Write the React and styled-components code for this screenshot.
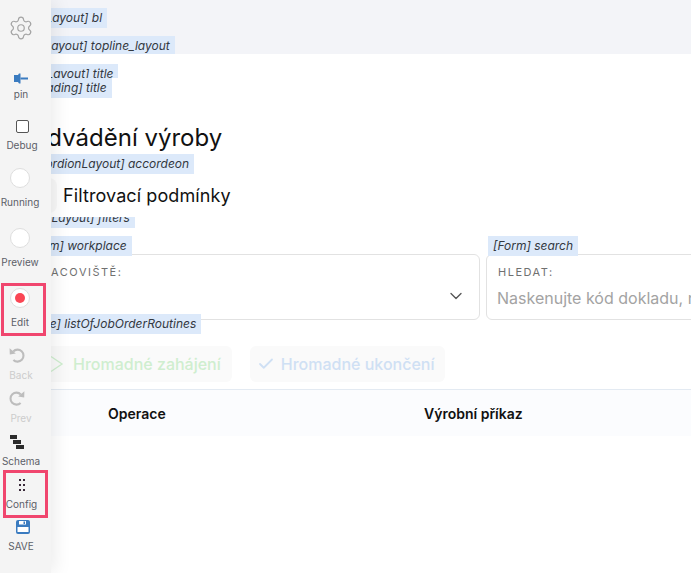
import styled, { createGlobalStyle } from 'styled-components'
import { Settings, Check, ChevronDown } from 'lucide-react'

const GlobalStyle = createGlobalStyle`
    html, body {
        margin: 0;
        padding: 0;
        height: 100%;
        overflow: hidden;
        background: #ffffff;
        font-family: Inter, "Liberation Sans", sans-serif;
    }
`

const Page = styled.div`
    position: relative;
    width: 691px;
    height: 573px;
    overflow: hidden;
`

const Sidebar = styled.aside`
    position: absolute;
    top: 0;
    left: 0;
    bottom: 0;
    width: 51px;
    display: flex;
    flex-direction: column;
    align-items: flex-start;
    background: #f4f4f4;
    box-shadow: 4px 0 18px rgba(0, 0, 0, 0.08);
    z-index: 5;
`

const GearSlot = styled.div`
    height: 56px;
    width: 42px;
    display: flex;
    align-items: center;
    justify-content: center;
    color: #a4a4a4;
`

const Tool = styled.div`
    height: ${p => p.$h}px;
    width: 51px;
    box-sizing: border-box;
    display: flex;
    flex-direction: column;
    align-items: center;
    justify-content: flex-end;
    gap: ${p => p.$gap}px;
    padding-right: ${p => p.$pr ?? 9}px;
`

const MarkedTool = styled(Tool)`
    width: 45px;
    margin-top: ${p => p.$mt}px;
    margin-left: ${p => p.$ml}px;
    padding-bottom: 5px;
    border: 3px solid #f0466e;
`

const ToolLabel = styled.span`
    font-size: 10px;
    line-height: 12px;
    color: ${p => (p.$off ? '#cccccc' : '#5c6068')};
    white-space: nowrap;
`

const DebugBox = styled.span`
    display: block;
    width: 13px;
    height: 13px;
    box-sizing: border-box;
    border: 1px solid #555;
    border-radius: 2px;
    background: #fff;
`

const Lamp = styled.span`
    width: 20px;
    height: 20px;
    box-sizing: border-box;
    border: 1px solid #dedede;
    border-radius: 50%;
    background: #fff;
    display: flex;
    align-items: center;
    justify-content: center;
`

const LampDot = styled.span`
    width: 10px;
    height: 10px;
    border-radius: 50%;
    background: #fa4654;
`

const NudgedIcon = styled.span`
    display: flex;
    margin-right: ${p => p.$right}px;
    color: #bdbdbd;
`

const Main = styled.main`
    display: flex;
    flex-direction: column;
    width: 691px;
`

const TopBand = styled.div`
    height: 54px;
    background: #f3f4f8;
    display: flex;
    flex-direction: column;
    align-items: flex-start;
    gap: 8px;
    padding-top: 8px;
    box-sizing: border-box;
`

const Tag = styled.div`
    align-self: flex-start;
    background: #dce9fa;
    color: #33383f;
    font-size: 12px;
    font-style: italic;
    line-height: 20px;
    height: ${p => p.$h || 20}px;
    margin-left: ${p => p.$x ?? 0}px;
    margin-top: ${p => p.$mt || 0}px;
    padding: 0 5px;
    white-space: nowrap;
    position: relative;
    z-index: 1;
`

const Title = styled.h1`
    margin: 25px 0 0 29px;
    font-size: 24px;
    line-height: 30px;
    font-weight: 400;
    color: #111;
    white-space: nowrap;
`

const AccordionHead = styled.div`
    position: relative;
    z-index: 2;
    display: flex;
    align-items: center;
    height: 43px;
    background: #fff;
    font-size: 18px;
    letter-spacing: 0.1px;
    color: #111;
    padding-left: 14px;
    gap: 6px;
`

const AccordionToggle = styled.span`
    width: 43px;
    height: 35px;
    border-radius: 8px;
    background: #f8f8f8;
`

const Fields = styled.div`
    display: flex;
    gap: 6px;
    width: 900px;
`

const FieldColumn = styled.div`
    display: flex;
    flex-direction: column;
    width: ${p => p.$w}px;
    margin-left: ${p => p.$ml || 0}px;
    flex: none;
`

const FieldBox = styled.div`
    height: 66px;
    box-sizing: border-box;
    border: 1px solid #e2e2e2;
    border-radius: 6px;
    background: #fff;
    margin-top: -2px;
    padding: 11px 11px 0 11px;
    position: relative;
`

const FieldLabel = styled.div`
    font-size: 11px;
    line-height: 13px;
    letter-spacing: 1.5px;
    color: #707070;
`

const FieldValue = styled.div`
    margin: 9px 0 0 -1px;
    font-size: 16px;
    line-height: 20px;
    color: #a3a3a3;
    white-space: nowrap;
`

const SelectArrow = styled.span`
    position: absolute;
    right: 13px;
    top: 31px;
    color: #555;
    display: flex;
`

const Actions = styled.div`
    display: flex;
    gap: 18px;
    margin-top: 12px;
    padding-left: 38px;
`

const ActionButton = styled.button`
    height: 36px;
    display: flex;
    align-items: center;
    gap: ${p => p.$gap}px;
    padding: 0 ${p => p.$pr}px 0 ${p => p.$pl}px;
    border: none;
    border-radius: 6px;
    background: #fafafa;
    color: ${p => p.$color};
    font-family: inherit;
    font-size: 16px;
    font-weight: 500;
    white-space: nowrap;
`

const TableHead = styled.div`
    margin-top: 7px;
    height: 47px;
    box-sizing: border-box;
    border-top: 1px solid #e3eaf2;
    background: #fbfcfe;
    display: grid;
    grid-template-columns: 424px 1fr;
    align-items: center;
    font-size: 14px;
    font-weight: 600;
    color: #111;
`

const HeadCell = styled.div`
    padding-left: ${p => p.$pl || 0}px;
`

function PinIcon() {
    return (
        <svg width="14" height="11" viewBox="0 0 14 11">
            <path d="M0 2 H4 L5 0.5 H6.5 V10.5 H5 L4 9 H0 Z" fill="#3a7bc0" />
            <rect x="6.5" y="4.5" width="7.5" height="2" fill="#3a7bc0" />
        </svg>
    )
}

function UndoArc() {
    return (
        <svg width="16" height="16" viewBox="0 0 16 16" fill="none">
            <path d="M4.2 4.4 A6 6 0 1 1 4.4 13" stroke="currentColor" strokeWidth="2.1" />
            <path d="M0.6 1.2 L0.8 7.4 L6.8 6.6 Z" fill="currentColor" />
        </svg>
    )
}

function RedoArc() {
    return (
        <svg width="16" height="16" viewBox="0 0 16 16" fill="none">
            <path d="M11.8 4.4 A6 6 0 1 0 11.6 13" stroke="currentColor" strokeWidth="2.1" />
            <path d="M15.4 1.2 L15.2 7.4 L9.2 6.6 Z" fill="currentColor" />
        </svg>
    )
}

function SchemaIcon() {
    return (
        <svg width="14" height="14" viewBox="0 0 14 14">
            <rect x="0" y="0" width="7" height="4" fill="#2b2b2b" />
            <rect x="3" y="5" width="8" height="4" fill="#2b2b2b" />
            <rect x="6" y="10" width="8" height="4" fill="#2b2b2b" />
        </svg>
    )
}

function DotsIcon() {
    return (
        <svg width="6" height="12" viewBox="0 0 6 12">
            {[0, 5, 10].map(y => (
                <g key={y} fill="#3b2b3b">
                    <rect x="0" y={y} width="2" height="2" />
                    <rect x="4" y={y} width="2" height="2" />
                </g>
            ))}
        </svg>
    )
}

function SaveIcon() {
    return (
        <svg width="14" height="14" viewBox="0 0 14 14">
            <rect x="0" y="0" width="14" height="14" rx="2" fill="#3a7bc0" />
            <rect x="1.5" y="7" width="11" height="5" fill="#fff" />
            <rect x="3" y="1" width="7" height="3.5" fill="#fff" />
            <rect x="7.5" y="1.5" width="1.5" height="2.5" fill="#3a7bc0" />
        </svg>
    )
}

function ChevronLine() {
    return (
        <svg width="20" height="18" viewBox="0 0 20 18" fill="none" stroke="currentColor" strokeWidth="1.4">
            <path d="M3 1.5 L14 9 L3 16.5" />
        </svg>
    )
}

function App() {
    return (
        <>
            <GlobalStyle />
            <Page>
                <Main>
                    <TopBand>
                        <Tag $x={36}>[Layout] bl</Tag>
                        <Tag $x={35} $h={18}>[Layout] topline_layout</Tag>
                    </TopBand>
                    <Tag $x={37} $mt={10} $h={14}>[Layout] title</Tag>
                    <Tag $x={21}>[Heading] title</Tag>
                    <Title>Odvádění výroby</Title>
                    <Tag $x={14} $mt={1}>[AccordionLayout] accordeon</Tag>
                    <AccordionHead>
                        <AccordionToggle />
                        Filtrovací podmínky
                    </AccordionHead>
                    <Tag $x={42} $mt={-9}>[Layout] filters</Tag>
                    <Fields>
                        <FieldColumn $w={458} $ml={22}>
                            <Tag $x={-1} $mt={8}>[Form] workplace</Tag>
                            <FieldBox>
                                <FieldLabel>PRACOVIŠTĚ:</FieldLabel>
                                <SelectArrow>
                                    <ChevronDown size={20} strokeWidth={1.6} />
                                </SelectArrow>
                            </FieldBox>
                        </FieldColumn>
                        <FieldColumn $w={400}>
                            <Tag $x={2} $mt={8}>[Form] search</Tag>
                            <FieldBox>
                                <FieldLabel>HLEDAT:</FieldLabel>
                                <FieldValue>Naskenujte kód dokladu, nebo</FieldValue>
                            </FieldBox>
                        </FieldColumn>
                    </Fields>
                    <Tag $x={16} $mt={-6}>[Table] listOfJobOrderRoutines</Tag>
                    <Actions>
                        <ActionButton $color="#cfeecf" $pl={10} $pr={11} $gap={5}>
                            <ChevronLine />
                            Hromadné zahájení
                        </ActionButton>
                        <ActionButton $color="#cfe0f4" $pl={7} $pr={10} $gap={6}>
                            <Check size={18} strokeWidth={2.4} />
                            Hromadné ukončení
                        </ActionButton>
                    </Actions>
                    <TableHead>
                        <HeadCell $pl={108}>Operace</HeadCell>
                        <HeadCell>Výrobní příkaz</HeadCell>
                    </TableHead>
                </Main>
                <Sidebar>
                    <GearSlot>
                        <Settings size={26} strokeWidth={1.1} />
                    </GearSlot>
                    <Tool $h={44} $gap={4}>
                        <PinIcon />
                        <ToolLabel>pin</ToolLabel>
                    </Tool>
                    <Tool $h={51} $gap={6} $pr={7}>
                        <DebugBox />
                        <ToolLabel>Debug</ToolLabel>
                    </Tool>
                    <Tool $h={57} $gap={8} $pr={11}>
                        <Lamp />
                        <ToolLabel>Running</ToolLabel>
                    </Tool>
                    <Tool $h={60} $gap={8} $pr={11}>
                        <Lamp />
                        <ToolLabel>Preview</ToolLabel>
                    </Tool>
                    <MarkedTool $h={53} $mt={15} $ml={1} $gap={8} $pr={7}>
                        <Lamp>
                            <LampDot />
                        </Lamp>
                        <ToolLabel>Edit</ToolLabel>
                    </MarkedTool>
                    <Tool $h={45} $gap={6}>
                        <NudgedIcon $right={8}>
                            <UndoArc />
                        </NudgedIcon>
                        <ToolLabel $off>Back</ToolLabel>
                    </Tool>
                    <Tool $h={43} $gap={6}>
                        <NudgedIcon $right={8}>
                            <RedoArc />
                        </NudgedIcon>
                        <ToolLabel $off>Prev</ToolLabel>
                    </Tool>
                    <Tool $h={43} $gap={6}>
                        <NudgedIcon $right={8}>
                            <SchemaIcon />
                        </NudgedIcon>
                        <ToolLabel>Schema</ToolLabel>
                    </Tool>
                    <MarkedTool $h={48} $mt={3} $ml={3} $gap={7} $pr={8}>
                        <DotsIcon />
                        <ToolLabel>Config</ToolLabel>
                    </MarkedTool>
                    <Tool $h={34} $gap={6}>
                        <NudgedIcon $right={-4}>
                            <SaveIcon />
                        </NudgedIcon>
                        <ToolLabel>SAVE</ToolLabel>
                    </Tool>
                </Sidebar>
            </Page>
        </>
    )
}

export default App
